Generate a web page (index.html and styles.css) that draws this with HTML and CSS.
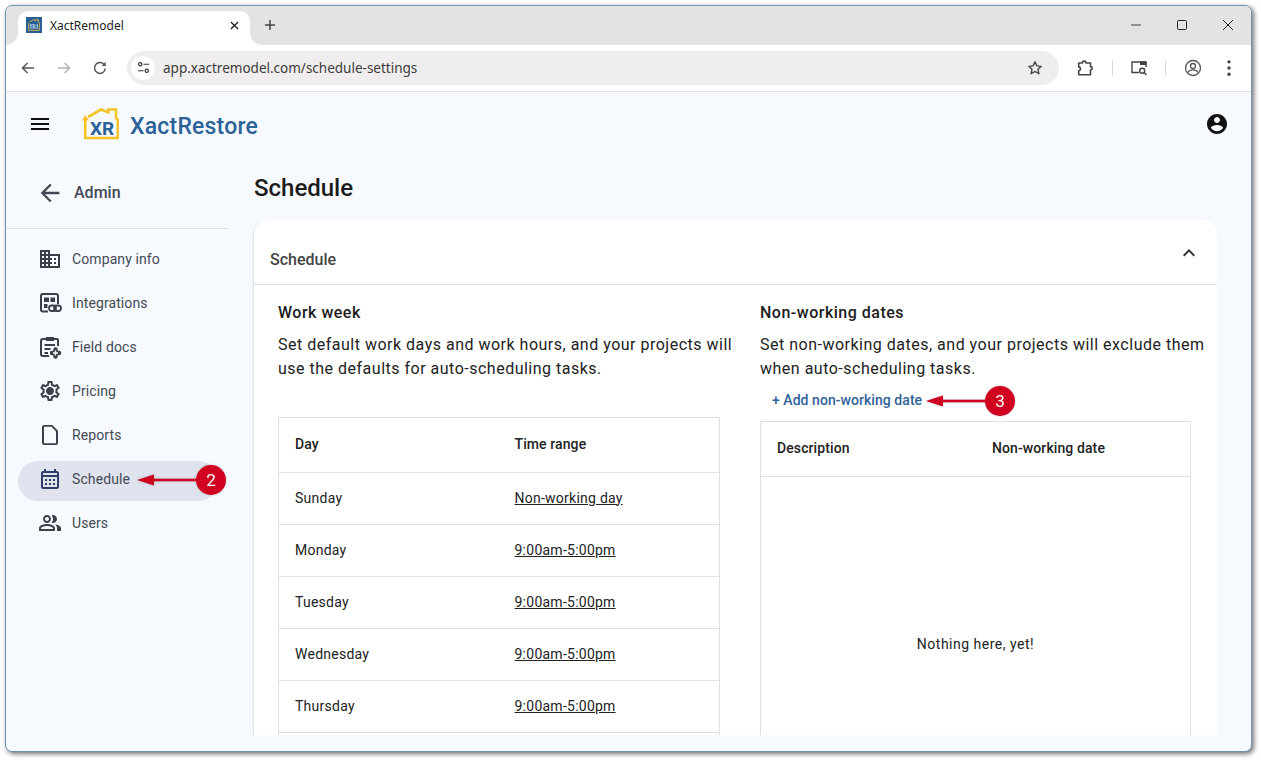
FILE: index.html
```html
<!DOCTYPE html>
<html lang="en">
<head>
<meta charset="utf-8">
<title>XactRemodel</title>
<link rel="stylesheet" href="styles.css">
</head>
<body>
<div class="window">
  <div class="tabbar">
    <div class="tab">
      <svg class="favicon" viewBox="0 0 16 16"><rect width="16" height="16" fill="#2a5f96"/><path d="M2.700 6v7.300h10.600V6l-1-.8V2.700h-2.500v1L7.500 2.700 3.500 5" fill="none" stroke="#c9b64a" stroke-width="1"/><rect x="4" y="7" width="8" height="4.500" fill="#a9c4de"/><path d="M5 7.500l2 3.500M7 7.500l-2 3.500M9 11V7.500h2v1.800H9M10 9.300l1 1.700" fill="none" stroke="#2a5f96" stroke-width=".7"/></svg>
      <span class="tab-title">XactRemodel</span>
      <svg class="tab-close" viewBox="0 0 10 10"><path d="M1 1l8 8M9 1L1 9" stroke="#222" stroke-width="1.500" fill="none"/></svg>
    </div>
    <svg class="new-tab" viewBox="0 0 12 12"><path d="M6 1v10M1 6h10" stroke="#444" stroke-width="1.500" fill="none"/></svg>
    <div class="win-controls">
      <span class="win-btn"><svg viewBox="0 0 12 12"><path d="M1 6h10" stroke="#777" stroke-width="1.400"/></svg></span>
      <span class="win-btn"><svg viewBox="0 0 12 12"><rect x="1.500" y="1.500" width="9" height="9" rx="1" fill="none" stroke="#222" stroke-width="1"/></svg></span>
      <span class="win-btn"><svg viewBox="0 0 12 12"><path d="M1 1l10 10M11 1L1 11" stroke="#222" stroke-width="1" fill="none"/></svg></span>
    </div>
  </div>
  <div class="toolbar">
    <span class="tb-btn"><svg viewBox="0 0 16 16"><path d="M14 8H2.500M7.500 3L2.500 8l5 5" fill="none" stroke="#555" stroke-width="1.500"/></svg></span>
    <span class="tb-btn"><svg viewBox="0 0 16 16"><path d="M2 8h11.500M8.500 3l5 5-5 5" fill="none" stroke="#b4b4b4" stroke-width="1.500"/></svg></span>
    <span class="tb-btn"><svg viewBox="0 0 16 16"><path d="M13.300 8.500A5.400 5.400 0 1 1 11.800 4.200" fill="none" stroke="#555" stroke-width="1.500"/><path d="M13.800 1.700v4.200H9.600z" fill="#555"/></svg></span>
    <div class="address">
      <span class="site-info"><svg viewBox="0 0 14 14"><circle cx="3.500" cy="3.500" r="1.800" fill="none" stroke="#333" stroke-width="1.300"/><path d="M7 3.500h6M1 10.500h6" stroke="#333" stroke-width="1.300"/><circle cx="10.500" cy="10.500" r="1.800" fill="none" stroke="#333" stroke-width="1.300"/></svg></span>
      <span class="url">app.xactremodel.com/schedule-settings</span>
      <svg class="star" viewBox="0 0 16 16"><path d="M8 1.800l1.850 4.050 4.400.5-3.250 3 .9 4.350L8 11.500l-3.900 2.200.9-4.350-3.250-3 4.400-.5z" fill="none" stroke="#444" stroke-width="1.400" stroke-linejoin="round"/></svg>
    </div>
    <span class="tb-btn tb-first"><svg viewBox="0 0 16 16"><path d="M1.500 3.500h3.300a1.600 1.600 0 0 1 3.200 0h4v3.300a1.500 1.500 0 0 1 0 3v4.200H1.500V10.500c2 0 2-3.500 0-3.500z" fill="none" stroke="#444" stroke-width="1.400" stroke-linejoin="round"/></svg></span>
    <span class="tb-sep"></span>
    <span class="tb-btn"><svg viewBox="0 0 18 18"><path d="M9 13.500H2V3h14v5" fill="none" stroke="#444" stroke-width="1.400"/><rect x="10" y="2.500" width="6.500" height="3.500" fill="#444"/><circle cx="12.200" cy="11.700" r="2.500" fill="none" stroke="#444" stroke-width="1.400"/><path d="M14 13.500l2.500 2.500" stroke="#444" stroke-width="1.400"/></svg></span>
    <span class="tb-sep tb-sep-wide"></span>
    <span class="tb-btn"><svg viewBox="0 0 18 18"><circle cx="9" cy="9" r="7.500" fill="none" stroke="#555" stroke-width="1.300"/><circle cx="9" cy="7" r="2.500" fill="none" stroke="#555" stroke-width="1.300"/><path d="M3.800 13.500c1-2 3-2.700 5.200-2.700s4.200.7 5.200 2.700" fill="none" stroke="#555" stroke-width="1.300"/></svg></span>
    <span class="tb-btn"><svg viewBox="0 0 16 16"><circle cx="8" cy="2.500" r="1.500" fill="#444"/><circle cx="8" cy="8" r="1.500" fill="#444"/><circle cx="8" cy="13.500" r="1.500" fill="#444"/></svg></span>
  </div>

  <div class="page">
    <header class="app-header">
      <svg class="menu-icon" viewBox="0 0 24 24"><path d="M3 18h18v-2H3v2zm0-5h18v-2H3v2zm0-7v2h18V6H3z"/></svg>
      <div class="logo">
        <svg class="logo-mark" viewBox="0 0 37 32"><path d="M3.300 12v18h32.500V11.500l-1.800-1.200V1.500h-7.700v2.800L19 1.500 6 9" fill="none" stroke="#f6c428" stroke-width="2.600"/><path d="M0 12.500l3.300-5.500 3.700 5.500z" fill="#f6c428"/></svg>
        <span class="logo-xr">XR</span>
        <span class="logo-text">XactRestore</span>
      </div>
      <svg class="account" viewBox="0 0 24 24"><path d="M12 2C6.480 2 2 6.480 2 12s4.480 10 10 10 10-4.480 10-10S17.520 2 12 2zm0 3c1.660 0 3 1.340 3 3s-1.340 3-3 3-3-1.340-3-3 1.340-3 3-3zm0 14.200c-2.500 0-4.710-1.280-6-3.220.03-1.990 4-3.080 6-3.080 1.990 0 5.970 1.090 6 3.080-1.290 1.940-3.500 3.220-6 3.220z"/></svg>
    </header>
    <div class="content">
      <aside class="sidebar">
        <div class="admin">
          <svg class="back" viewBox="0 0 24 24"><path d="M20 11H7.830l5.590-5.590L12 4l-8 8 8 8 1.410-1.410L7.830 13H20v-2z"/></svg>
          <span>Admin</span>
        </div>
        <nav class="nav">
          <a class="nav-item"><svg viewBox="0 0 24 24"><path d="M12 7V3H2v18h20V7H12zM6 19H4v-2h2v2zm0-4H4v-2h2v2zm0-4H4V9h2v2zm0-4H4V5h2v2zm4 12H8v-2h2v2zm0-4H8v-2h2v2zm0-4H8V9h2v2zm0-4H8V5h2v2zm10 12h-8v-2h2v-2h-2v-2h2v-2h-2V9h8v10zm-2-8h-2v2h2v-2zm0 4h-2v2h2v-2z"/></svg><span>Company info</span></a>
          <a class="nav-item"><svg viewBox="0 0 24 24"><path d="M10 20.500H5a2 2 0 0 1-2-2V5a2 2 0 0 1 2-2h13a2 2 0 0 1 2 2v8" fill="none" stroke="currentColor" stroke-width="2"/><path d="M6 6.500h5v4.500H6zM12.500 6.500h4.500v4.500h-4.500zM6 13h3.500v4H6z"/><rect x="11" y="14.500" width="7" height="5.500" rx="2.750" fill="none" stroke="currentColor" stroke-width="1.800"/><rect x="16" y="14.500" width="7" height="5.500" rx="2.750" fill="none" stroke="currentColor" stroke-width="1.800"/></svg><span>Integrations</span></a>
          <a class="nav-item"><svg viewBox="0 0 24 24"><path d="M11 21H5a2 2 0 0 1-2-2V6a2 2 0 0 1 2-2h14a1 1 0 0 1 1 1v6" fill="none" stroke="currentColor" stroke-width="2"/><path d="M8 2h8v4H8zM6.500 9h10.500v2H6.500zM6.500 13h6v2h-6zM6.500 17h3.500v2H6.500z"/><path d="M17.500 14.500v7M14 18h7" stroke="currentColor" stroke-width="4.500" stroke-linecap="round"/><path d="M17.500 15.500v5M15 18h5" stroke="#f6f9fd" stroke-width="1.400"/></svg><span>Field docs</span></a>
          <a class="nav-item"><svg viewBox="0 0 24 24"><path d="M19.430 12.980c.04-.32.07-.64.07-.98 0-.34-.03-.66-.07-.98l2.110-1.650c.19-.15.24-.42.12-.64l-2-3.460c-.09-.16-.26-.25-.44-.25-.06 0-.12.01-.17.03l-2.490 1c-.52-.4-1.080-.73-1.690-.98l-.38-2.650C14.460 2.180 14.250 2 14 2h-4c-.25 0-.46.18-.49.42l-.38 2.650c-.61.25-1.170.59-1.690.98l-2.490-1c-.06-.02-.12-.03-.18-.03-.17 0-.34.09-.43.25l-2 3.460c-.13.22-.07.49.12.64l2.110 1.650c-.04.32-.07.65-.07.98 0 .33.03.66.07.98l-2.110 1.650c-.19.15-.24.42-.12.64l2 3.460c.09.16.26.25.44.25.06 0 .12-.01.17-.03l2.490-1c.52.4 1.080.73 1.690.98l.38 2.650c.03.24.24.42.49.42h4c.25 0 .46-.18.49-.42l.38-2.650c.61-.25 1.170-.59 1.690-.98l2.490 1c.06.02.12.03.18.03.17 0 .34-.09.43-.25l2-3.460c.12-.22.07-.49-.12-.64l-2.110-1.650zm-1.980-1.710c.04.31.05.52.05.73 0 .21-.02.43-.05.73l-.14 1.130.89.7 1.080.84-.7 1.210-1.270-.51-1.040-.42-.9.68c-.43.32-.84.56-1.250.73l-1.060.43-.16 1.130-.2 1.350h-1.400l-.19-1.350-.16-1.130-1.060-.43c-.43-.18-.83-.41-1.230-.71l-.91-.7-1.060.43-1.270.51-.7-1.210 1.080-.84.89-.7-.14-1.130c-.03-.31-.05-.54-.05-.74s.02-.43.05-.73l.14-1.130-.89-.7-1.080-.84.7-1.210 1.270.51 1.040.42.9-.68c.43-.32.84-.56 1.250-.73l1.060-.43.16-1.130.2-1.350h1.390l.19 1.350.16 1.130 1.060.43c.43.18.83.41 1.230.71l.91.7 1.060-.43 1.270-.51.7 1.210-1.070.85-.89.7.14 1.130zM12 8c-2.210 0-4 1.790-4 4s1.790 4 4 4 4-1.790 4-4-1.790-4-4-4z"/></svg><span>Pricing</span></a>
          <a class="nav-item"><svg viewBox="0 0 24 24"><path d="M14.300 2H6c-1.100 0-2 .9-2 2v16c0 1.100.9 2 2 2h12c1.100 0 2-.9 2-2V7.700zM18 20.200H6V3.800h7.500L18 8.500z"/></svg><span>Reports</span></a>
          <a class="nav-item active"><svg viewBox="0 0 24 24"><path d="M19 4h-1V2h-2v2H8V2H6v2H5c-1.100 0-2 .9-2 2v14c0 1.100.9 2 2 2h14c1.100 0 2-.9 2-2V6c0-1.100-.9-2-2-2zm0 16H5V10h14v10zm0-12H5V6h14v2zM9 14H7v-2h2v2zm4 0h-2v-2h2v2zm4 0h-2v-2h2v2zm-8 4H7v-2h2v2zm4 0h-2v-2h2v2zm4 0h-2v-2h2v2z"/></svg><span>Schedule</span></a>
          <a class="nav-item"><svg viewBox="0 0 24 24"><path d="M16.670 13.130C18.040 14.060 19 15.320 19 17v3h4v-3c0-2.180-3.570-3.470-6.330-3.870zM15 12c2.210 0 4-1.790 4-4s-1.790-4-4-4c-.47 0-.91.1-1.330.24C14.500 5.270 15 6.580 15 8s-.5 2.730-1.330 3.760c.42.14.86.24 1.330.24zM9 12c2.210 0 4-1.790 4-4s-1.790-4-4-4-4 1.790-4 4 1.790 4 4 4zm0-6c1.100 0 2 .9 2 2s-.9 2-2 2-2-.9-2-2 .9-2 2-2zM9 13c-2.670 0-8 1.340-8 4v3h16v-3c0-2.660-5.330-4-8-4zm6 5H3v-.99C3.200 16.290 6.300 15 9 15s5.800 1.290 6 2z"/></svg><span>Users</span></a>
        </nav>
      </aside>
      <main class="main">
        <h1 class="page-title">Schedule</h1>
        <section class="card">
          <div class="card-head">
            <h2>Schedule</h2>
            <svg class="chevron" viewBox="0 0 24 24"><path d="M12 8l-6 6 1.410 1.410L12 10.830l4.590 4.580L18 14z"/></svg>
          </div>
          <div class="card-body">
            <div class="col col-left">
              <h3>Work week</h3>
              <p>Set default work days and work hours, and your projects will use the defaults for auto-scheduling tasks.</p>
              <table class="tbl tbl-week">
                <thead><tr><th>Day</th><th>Time range</th></tr></thead>
                <tbody>
                  <tr><td>Sunday</td><td><a>Non-working day</a></td></tr>
                  <tr><td>Monday</td><td><a>9:00am-5:00pm</a></td></tr>
                  <tr><td>Tuesday</td><td><a>9:00am-5:00pm</a></td></tr>
                  <tr><td>Wednesday</td><td><a>9:00am-5:00pm</a></td></tr>
                  <tr><td>Thursday</td><td><a>9:00am-5:00pm</a></td></tr>
                  <tr><td></td><td></td></tr>
                </tbody>
              </table>
            </div>
            <div class="col col-right">
              <h3>Non-working dates</h3>
              <p>Set non-working dates, and your projects will exclude them when auto-scheduling tasks.</p>
              <a class="add-link">+ Add non-working date</a>
              <div class="dates">
                <div class="dates-head"><span>Description</span><span>Non-working date</span></div>
                <div class="dates-empty">Nothing here, yet!</div>
              </div>
            </div>
          </div>
        </section>
      </main>
    </div>
  </div>

  <div class="callout callout-2">
    <svg viewBox="0 0 60 12"><path d="M17 6h43" stroke="#d0021f" stroke-width="2.500"/><path d="M0 6L17 .5v11z" fill="#d0021f"/></svg>
    <span class="badge">2</span>
  </div>
  <div class="callout callout-3">
    <svg viewBox="0 0 60 12"><path d="M17 6h43" stroke="#d0021f" stroke-width="2.500"/><path d="M0 6L17 .5v11z" fill="#d0021f"/></svg>
    <span class="badge">3</span>
  </div>
</div>
</body>
</html>
```
FILE: styles.css
```css
* { box-sizing: border-box; }
html, body { margin: 0; height: 100%; background: #fff; }
body { padding: 5px; font-family: Roboto, sans-serif; overflow: hidden; }
h1, h2, h3, p { margin: 0; }

.window {
  position: relative;
  width: 1247px;
  height: 747px;
  border: 1px solid #6f93b3;
  border-radius: 7px;
  overflow: hidden;
  display: flex;
  flex-direction: column;
  background: #f6f9fd;
  box-shadow: 2px 2px 5px rgba(0, 0, 0, .55);
}

/* browser chrome */
.tabbar {
  height: 39px;
  flex: none;
  display: flex;
  align-items: flex-end;
  padding-left: 12px;
  background: #e3e3e3;
}
.tab {
  position: relative;
  width: 232px;
  height: 34px;
  display: flex;
  align-items: center;
  padding: 0 8px 6px;
  background: #fff;
  border-radius: 10px 10px 0 0;
}
.tab::before, .tab::after {
  content: "";
  position: absolute;
  bottom: 0;
  width: 12px;
  height: 12px;
}
.tab::before { left: -12px; background: radial-gradient(circle at 0 0, #e3e3e3 11.500px, #fff 12px); }
.tab::after { right: -12px; background: radial-gradient(circle at 100% 0, #e3e3e3 11.500px, #fff 12px); }
.favicon { width: 16px; height: 16px; flex: none; }
.tab-title {
  margin-left: 8px;
  flex: 1;
  font: 12px "Noto Sans", sans-serif;
  color: #222;
}
.tab-close { width: 9px; height: 9px; margin-right: 3px; }
.new-tab { width: 12px; height: 12px; margin: 0 0 14px 14px; }
.win-controls { margin-left: auto; align-self: stretch; display: flex; }
.win-btn { width: 46px; display: flex; align-items: center; justify-content: center; padding-bottom: 1px; }
.win-btn svg { width: 12px; height: 12px; }

.toolbar {
  height: 47px;
  flex: none;
  display: flex;
  align-items: center;
  padding: 0 0 1px 4px;
  background: #fff;
  border-bottom: 1px solid #e1e1e1;
}
.tb-btn { width: 36px; height: 36px; flex: none; display: flex; align-items: center; justify-content: center; }
.tb-btn svg { width: 16px; height: 16px; }
.tb-btn:nth-child(n+5) svg { width: 18px; height: 18px; }
.tb-first { margin-left: 9px; }
.tb-sep { width: 1px; height: 16px; margin: 0 8px; background: #d8d8d8; flex: none; }
.tb-sep-wide { margin-right: 9px; }
.address {
  width: 932px;
  height: 34px;
  margin-left: 9px;
  flex: none;
  display: flex;
  align-items: center;
  padding: 0 16px 0 4px;
  background: #efeded;
  border-radius: 17px;
}
.site-info {
  width: 24px;
  height: 24px;
  border-radius: 50%;
  background: #fff;
  display: flex;
  align-items: center;
  justify-content: center;
}
.site-info svg { width: 13px; height: 13px; }
.url { margin-left: 8px; flex: 1; font: 13.500px "Noto Sans", sans-serif; color: #3c3c3c; }
.star { width: 16px; height: 16px; }

/* app */
.page { flex: 1; min-height: 0; display: flex; flex-direction: column; }
.app-header {
  height: 68px;
  flex: none;
  display: flex;
  align-items: center;
  padding: 0 22px 4px 22px;
}
.menu-icon { width: 24px; height: 24px; fill: #111; flex: none; }
.logo { position: relative; margin-left: 30px; display: flex; align-items: center; }
.logo-mark { width: 37px; height: 32px; flex: none; }
.logo-xr {
  position: absolute;
  left: 8px;
  top: 10px;
  font-size: 19px;
  line-height: 22px;
  font-weight: 700;
  color: #2a6299;
}
.logo-text { margin: 4px 0 0 11px; font-size: 23px; font-weight: 500; color: #2a6299; letter-spacing: .2px; }
.account { width: 24px; height: 24px; margin-left: auto; fill: #111; }

.content { flex: 1; min-height: 0; display: flex; }
.sidebar { width: 223px; flex: none; color: #444a55; }
.admin {
  height: 69px;
  display: flex;
  align-items: center;
  padding: 0 0 3px 30px;
  border-bottom: 1px solid #dde1e6;
  font-size: 16px;
  font-weight: 500;
}
.back { width: 28px; height: 28px; fill: #444a55; margin-right: 10px; }
.nav { padding: 12px 0 0 12px; display: flex; flex-direction: column; gap: 4px; }
.nav-item {
  height: 40px;
  width: 200px;
  display: flex;
  align-items: center;
  padding: 0 0 4px 20px;
  border-radius: 20px;
  font-size: 14px;
  letter-spacing: .1px;
}
.nav-item svg { width: 24px; height: 24px; margin-right: 10px; fill: #3c3f4a; color: #3c3f4a; flex: none; }
.nav-item.active { background: #e0e3ee; }
.nav-item.active svg { fill: #2f3f6a; }

.main { flex: 1; min-width: 0; margin-bottom: 16px; padding: 0 34px 0 25px; overflow: hidden; display: flex; flex-direction: column; }
.page-title { height: 60px; padding-top: 12px; flex: none; font-size: 24px; line-height: 32px; font-weight: 500; color: #1c1c1c; }
.card { flex: none; background: #fff; border-radius: 14px 14px 0 0; box-shadow: -1px 1px 2px rgba(0, 0, 0, .12); }
.card-head {
  height: 65px;
  display: flex;
  align-items: center;
  justify-content: space-between;
  padding: 14px 16px 0;
  border-bottom: 1px solid #e0e0e0;
}
.card-head h2 { font-size: 16px; font-weight: 500; color: #444; }
.chevron { width: 24px; height: 24px; fill: #333; margin: -12px 0 0 0; }
.card-body { display: flex; padding: 16px 0 0 24px; }
.col h3 { font-size: 16px; line-height: 24px; font-weight: 500; color: #1c1c1c; letter-spacing: .5px; margin-bottom: 8px; }
.col p { font-size: 16px; line-height: 24px; color: #222; letter-spacing: .5px; }
.col-left { width: 482px; flex: none; }
.col-left p { width: 460px; }
.col-right { width: 450px; flex: none; }

.tbl { width: 442px; margin-top: 36px; border-collapse: collapse; font-size: 14px; color: #222; letter-spacing: .25px; }
.tbl th, .tbl td { border-top: 1px solid #e0e0e0; border-bottom: 1px solid #e0e0e0; text-align: left; padding: 0 0 2px 16px; }
.tbl tr > :first-child { border-left: 1px solid #e0e0e0; width: 220px; }
.tbl tr > :last-child { border-right: 1px solid #e0e0e0; }
.tbl th { height: 55px; font-weight: 500; letter-spacing: .1px; }
.tbl td { height: 52px; }
.tbl a { text-decoration: underline; }

.add-link {
  display: block;
  height: 40px;
  padding-left: 12px;
  font-size: 14px;
  line-height: 39px;
  font-weight: 500;
  letter-spacing: .05px;
  color: #2f6299;
}
.dates { width: 431px; height: 600px; border: 1px solid #e0e0e0; font-size: 14px; color: #222; letter-spacing: .1px; }
.dates-head {
  height: 55px;
  display: grid;
  grid-template-columns: 215px 1fr;
  align-items: center;
  padding: 0 0 2px 16px;
  border-bottom: 1px solid #e0e0e0;
  font-weight: 500;
}
.dates-empty { height: 334px; display: flex; align-items: center; justify-content: center; letter-spacing: .5px; }

/* annotations over the page */
.callout { position: absolute; height: 30px; display: flex; align-items: center; filter: drop-shadow(0 0 1px rgba(0,0,0,.25)); }
.callout svg { width: 60px; height: 12px; margin-right: -1px; flex: none; }
.callout-2 { left: 131px; top: 459px; }
.callout-3 { left: 920px; top: 380px; }
.badge {
  width: 30px;
  height: 30px;
  border-radius: 50%;
  background: #d0021f;
  color: #fff;
  font-size: 17px;
  display: flex;
  align-items: center;
  justify-content: center;
}
```
